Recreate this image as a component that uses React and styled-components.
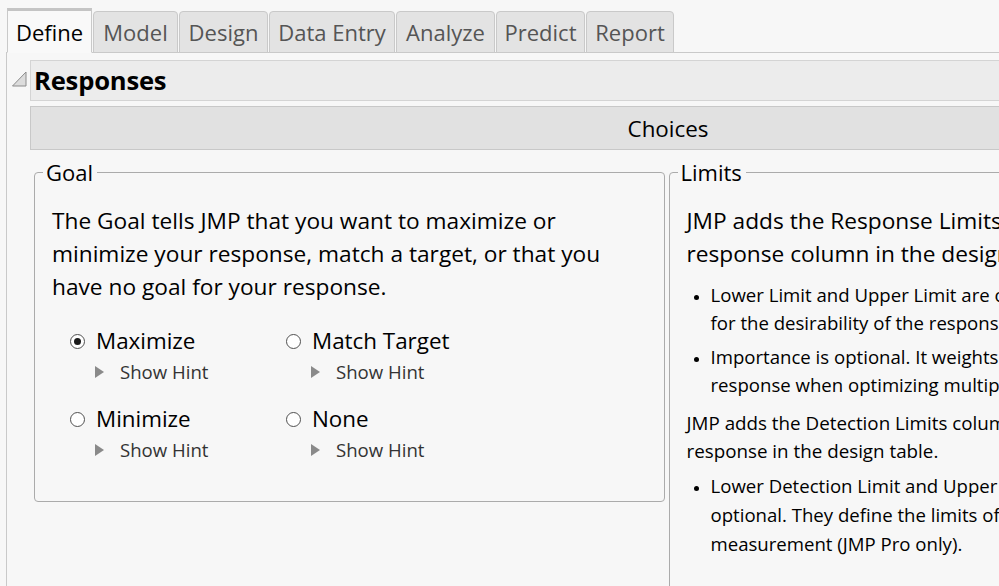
import React from "react";
import styled, { createGlobalStyle } from "styled-components";

const GlobalStyle = createGlobalStyle`
  html, body {
    margin: 0;
    padding: 0;
    background: #f7f7f7;
  }
  body {
    font-family: "Open Sans", "Noto Sans", sans-serif;
    color: #000;
  }
`;

const tabs = [
  { name: "Define", w: 85 },
  { name: "Model", w: 85 },
  { name: "Design", w: 89 },
  { name: "Data Entry", w: 126 },
  { name: "Analyze", w: 99 },
  { name: "Predict", w: 89 },
  { name: "Report", w: 88 },
];

const goals = [
  { label: "Maximize", checked: true },
  { label: "Match Target" },
  { label: "Minimize" },
  { label: "None" },
];

const App = () => {
  return (
    <>
      <GlobalStyle />
      <Page>
        <TabBar>
          {tabs.map((t, i) => (
            <Tab key={t.name} active={i === 0} w={t.w}>
              {t.name}
            </Tab>
          ))}
        </TabBar>
        <Panel>
          <Outline>
            <Disclosure width="15" height="16" viewBox="0 0 15 16">
              <polygon points="14,1 14,15 0.5,15" fill="#dcdcdc" stroke="#8c8c8c" strokeWidth="1" />
            </Disclosure>
            <OutlineBody>
              <OutlineHeader>Responses</OutlineHeader>
              <ChoicesBar>Choices</ChoicesBar>
              <Columns>
                <Group width="633px" height="344px">
                  <Legend>Goal</Legend>
                  <Lead>
                    The Goal tells JMP that you want to maximize or<br />
                    minimize your response, match a target, or that you<br />
                    have no goal for your response.
                  </Lead>
                  <RadioGrid>
                    {goals.map((g) => (
                      <Choice key={g.label}>
                        <RadioLine>
                          <Radio checked={g.checked} />
                          <span>{g.label}</span>
                        </RadioLine>
                        <Hint>
                          <HintArrow />
                          Show Hint
                        </Hint>
                      </Choice>
                    ))}
                  </RadioGrid>
                </Group>
                <Group width="640px" height="500px">
                  <Legend>Limits</Legend>
                  <Lead>
                    JMP adds the Response Limits column property to each<br />
                    response column in the design table.
                  </Lead>
                  <Bullets>
                    <li>
                      Lower Limit and Upper Limit are optional. They set the bounds<br />
                      for the desirability of the response.
                    </li>
                    <li>
                      Importance is optional. It weights the desirability of the<br />
                      response when optimizing multiple responses.
                    </li>
                  </Bullets>
                  <Small>
                    JMP adds the Detection Limits column property to each<br />
                    response in the design table.
                  </Small>
                  <Bullets tight>
                    <li>
                      Lower Detection Limit and Upper Detection Limit are<br />
                      optional. They define the limits of the<br />
                      measurement (JMP Pro only).
                    </li>
                  </Bullets>
                </Group>
              </Columns>
            </OutlineBody>
          </Outline>
        </Panel>
      </Page>
    </>
  );
};

export default App;

const Page = styled.div`
  width: 999px;
  height: 586px;
  overflow: hidden;
  background: #f7f7f7;
  padding-top: 8px;
  box-sizing: border-box;
`;

const TabBar = styled.div`
  display: flex;
  align-items: flex-end;
  padding-left: 7px;
  width: 1400px;
`;

const Tab = styled.div`
  box-sizing: border-box;
  flex: none;
  width: ${(p) => p.w}px;
  height: ${(p) => (p.active ? "45px" : "42px")};
  margin-right: 1px;
  display: flex;
  align-items: center;
  justify-content: center;
  font-size: 22px;
  white-space: nowrap;
  color: ${(p) => (p.active ? "#000" : "#555")};
  background: ${(p) => (p.active ? "#f9f9f9" : "#e3e3e3")};
  border: 1px solid #c9c9c9;
  border-top: ${(p) => (p.active ? "3px solid #c4c4c4" : "1px solid #c9c9c9")};
  border-bottom: ${(p) => (p.active ? "1px solid #f9f9f9" : "1px solid #c9c9c9")};
  border-radius: ${(p) => (p.active ? "0" : "4px 4px 0 0")};
  margin-bottom: -1px;
  position: relative;
  z-index: ${(p) => (p.active ? 1 : 0)};
`;

const Panel = styled.div`
  margin-left: 6px;
  width: 1400px;
  height: 600px;
  border-top: 1px solid #c9c9c9;
  border-left: 1px solid #c9c9c9;
  padding-top: 7px;
`;

const Outline = styled.div`
  display: flex;
  align-items: flex-start;
`;

const Disclosure = styled.svg`
  flex: none;
  margin: 11px 3px 0 5px;
`;

const OutlineBody = styled.div`
  flex: none;
  width: 1276px;
`;

const OutlineHeader = styled.div`
  box-sizing: border-box;
  height: 41px;
  display: flex;
  align-items: center;
  padding-left: 3px;
  background: #ececec;
  border: 1px solid #d4d4d4;
  font-size: 25.6px;
  font-weight: 700;
  letter-spacing: -0.2px;
`;

const ChoicesBar = styled.div`
  box-sizing: border-box;
  margin-top: 5px;
  height: 44px;
  display: flex;
  align-items: center;
  justify-content: center;
  background: #e1e1e1;
  border: 1px solid #c8c8c8;
  font-size: 22.4px;
`;

const Columns = styled.div`
  display: flex;
  gap: 4px;
  padding-left: 4px;
  margin-top: 8px;
`;

const Group = styled.fieldset`
  box-sizing: border-box;
  width: ${(p) => p.width};
  height: ${(p) => p.height};
  margin: 0;
  padding: 18px 16px 0 17px;
  border: 1px solid #ababab;
  border-radius: 4px;
  min-width: 0;
`;

const Legend = styled.legend`
  font-size: 22px;
  padding: 0 4px 0 3px;
  margin-left: -9px;
  line-height: 28px;
`;

const Lead = styled.p`
  margin: 0;
  font-size: 22.7px;
  line-height: 33px;
  white-space: nowrap;
`;

const RadioGrid = styled.div`
  display: grid;
  grid-template-columns: 216px 216px;
  row-gap: 16px;
  margin-top: 22px;
  padding-left: 18px;
`;

const Choice = styled.div`
  display: flex;
  flex-direction: column;
`;

const RadioLine = styled.label`
  display: flex;
  align-items: center;
  gap: 11px;
  font-size: 22.4px;
  line-height: 32px;
`;

const Radio = styled.span`
  box-sizing: border-box;
  width: 15px;
  height: 15px;
  border-radius: 50%;
  border: 1px solid #505050;
  background: #fff;
  display: inline-flex;
  align-items: center;
  justify-content: center;
  &::after {
    content: "";
    width: 7px;
    height: 7px;
    border-radius: 50%;
    background: ${(p) => (p.checked ? "#1a1a1a" : "transparent")};
  }
`;

const Hint = styled.div`
  display: flex;
  align-items: center;
  padding-left: 25px;
  font-size: 18.6px;
  line-height: 30px;
  color: #333;
`;

const HintArrow = styled.span`
  width: 0;
  height: 0;
  border-top: 6px solid transparent;
  border-bottom: 6px solid transparent;
  border-left: 9px solid #8a8a8a;
  margin-right: 16px;
`;

const Bullets = styled.ul`
  margin: ${(p) => (p.tight ? "6px" : "11px")} 0 0 0;
  padding-left: 24px;
  font-size: 18.6px;
  line-height: ${(p) => (p.tight ? "29px" : "28px")};
  white-space: nowrap;
  li {
    margin-bottom: 6px;
  }
  li::marker {
    font-size: 15px;
  }
`;

const Small = styled.p`
  margin: 10px 0 0 0;
  font-size: 18.8px;
  line-height: 28px;
  white-space: nowrap;
`;
